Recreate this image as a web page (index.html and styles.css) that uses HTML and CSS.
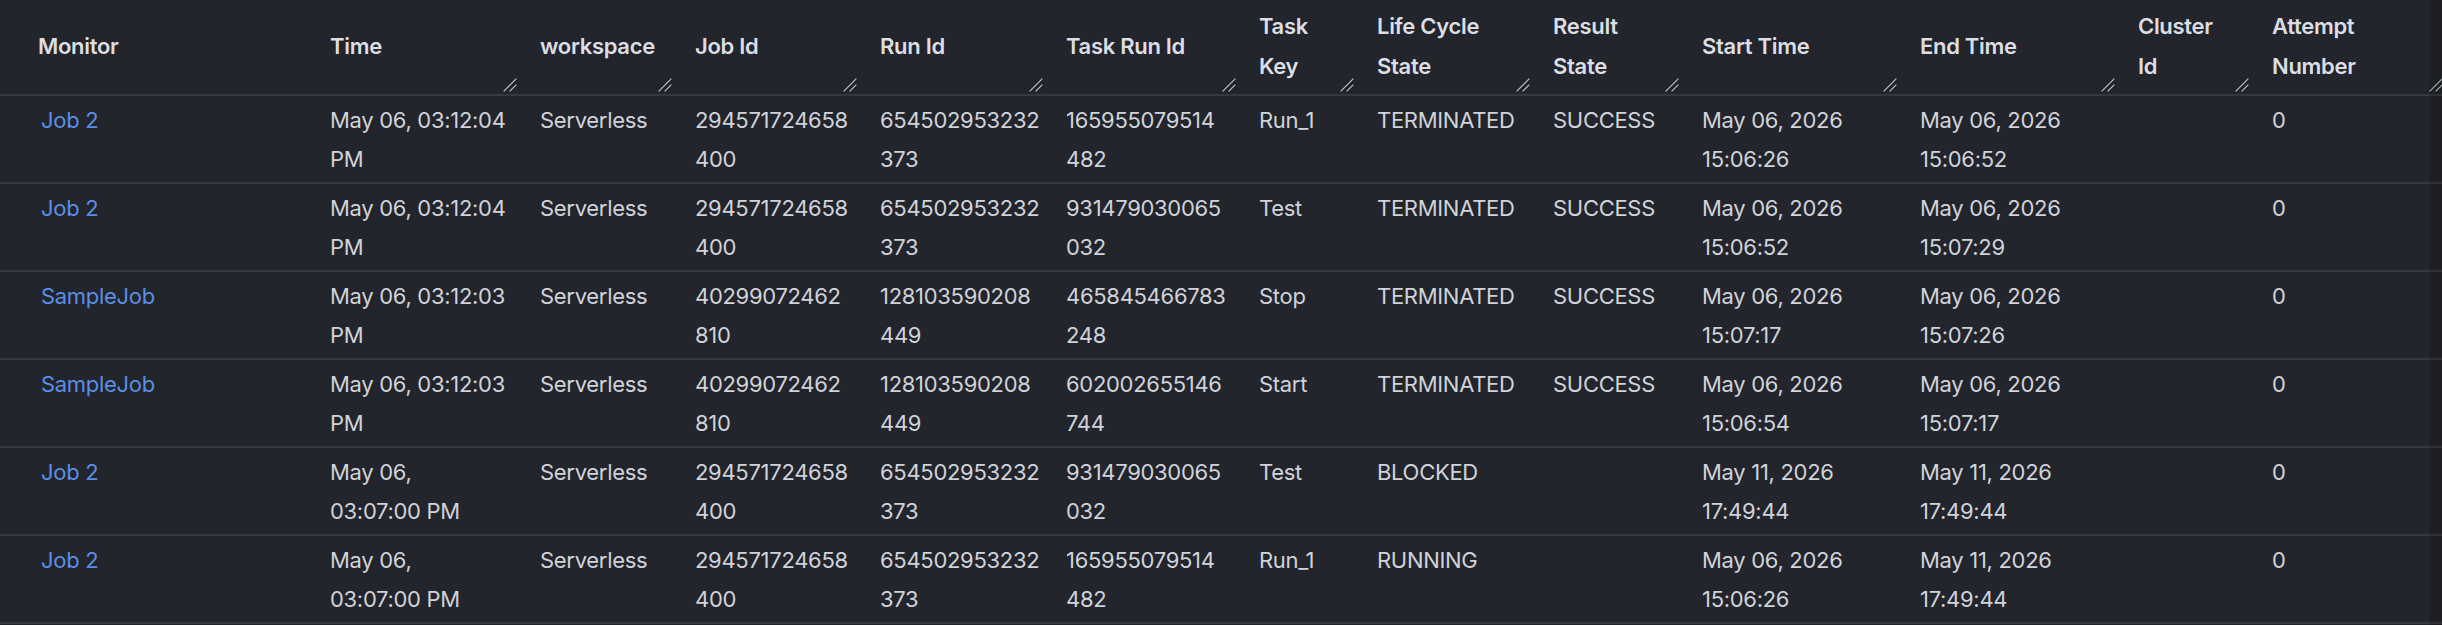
FILE: index.html
```html
<!DOCTYPE html>
<html lang="en">
<head>
<meta charset="utf-8">
<title>Job task runs</title>
<link rel="stylesheet" href="styles.css">
</head>
<body>
<div class="grid-wrap">
  <table class="grid">
    <colgroup>
      <col class="w-monitor"><col class="w-time"><col class="w-ws"><col class="w-id"><col class="w-run"><col class="w-task">
      <col class="w-key"><col class="w-life"><col class="w-result"><col class="w-date"><col class="w-date"><col class="w-cluster"><col class="w-attempt">
    </colgroup>
    <thead>
      <tr>
        <th>Monitor</th>
        <th>Time<svg class="grip" viewBox="0 0 14 14"><path class="g-dark" d="M1 13L13 1M7 13L13 7"/><path class="g-light" d="M1 13L13 1M7 13L13 7"/></svg></th>
        <th>workspace<svg class="grip" viewBox="0 0 14 14"><path class="g-dark" d="M1 13L13 1M7 13L13 7"/><path class="g-light" d="M1 13L13 1M7 13L13 7"/></svg></th>
        <th>Job Id<svg class="grip" viewBox="0 0 14 14"><path class="g-dark" d="M1 13L13 1M7 13L13 7"/><path class="g-light" d="M1 13L13 1M7 13L13 7"/></svg></th>
        <th>Run Id<svg class="grip" viewBox="0 0 14 14"><path class="g-dark" d="M1 13L13 1M7 13L13 7"/><path class="g-light" d="M1 13L13 1M7 13L13 7"/></svg></th>
        <th>Task Run Id<svg class="grip" viewBox="0 0 14 14"><path class="g-dark" d="M1 13L13 1M7 13L13 7"/><path class="g-light" d="M1 13L13 1M7 13L13 7"/></svg></th>
        <th>Task<br>Key<svg class="grip" viewBox="0 0 14 14"><path class="g-dark" d="M1 13L13 1M7 13L13 7"/><path class="g-light" d="M1 13L13 1M7 13L13 7"/></svg></th>
        <th>Life Cycle<br>State<svg class="grip" viewBox="0 0 14 14"><path class="g-dark" d="M1 13L13 1M7 13L13 7"/><path class="g-light" d="M1 13L13 1M7 13L13 7"/></svg></th>
        <th>Result<br>State<svg class="grip" viewBox="0 0 14 14"><path class="g-dark" d="M1 13L13 1M7 13L13 7"/><path class="g-light" d="M1 13L13 1M7 13L13 7"/></svg></th>
        <th>Start Time<svg class="grip" viewBox="0 0 14 14"><path class="g-dark" d="M1 13L13 1M7 13L13 7"/><path class="g-light" d="M1 13L13 1M7 13L13 7"/></svg></th>
        <th>End Time<svg class="grip" viewBox="0 0 14 14"><path class="g-dark" d="M1 13L13 1M7 13L13 7"/><path class="g-light" d="M1 13L13 1M7 13L13 7"/></svg></th>
        <th>Cluster<br>Id<svg class="grip" viewBox="0 0 14 14"><path class="g-dark" d="M1 13L13 1M7 13L13 7"/><path class="g-light" d="M1 13L13 1M7 13L13 7"/></svg></th>
        <th>Attempt<br>Number<svg class="grip" viewBox="0 0 14 14"><path class="g-dark" d="M1 13L13 1M7 13L13 7"/><path class="g-light" d="M1 13L13 1M7 13L13 7"/></svg></th>
      </tr>
    </thead>
    <tbody>
      <tr>
        <td><a class="link" href="#">Job 2</a></td>
        <td>May 06, 03:12:04<br>PM</td>
        <td>Serverless</td>
        <td>294571724658<br>400</td>
        <td>654502953232<br>373</td>
        <td>165955079514<br>482</td>
        <td>Run_1</td>
        <td>TERMINATED</td>
        <td>SUCCESS</td>
        <td>May 06, 2026<br>15:06:26</td>
        <td>May 06, 2026<br>15:06:52</td>
        <td></td>
        <td>0</td>
      </tr>
      <tr>
        <td><a class="link" href="#">Job 2</a></td>
        <td>May 06, 03:12:04<br>PM</td>
        <td>Serverless</td>
        <td>294571724658<br>400</td>
        <td>654502953232<br>373</td>
        <td>931479030065<br>032</td>
        <td>Test</td>
        <td>TERMINATED</td>
        <td>SUCCESS</td>
        <td>May 06, 2026<br>15:06:52</td>
        <td>May 06, 2026<br>15:07:29</td>
        <td></td>
        <td>0</td>
      </tr>
      <tr>
        <td><a class="link" href="#">SampleJob</a></td>
        <td>May 06, 03:12:03<br>PM</td>
        <td>Serverless</td>
        <td>40299072462<br>810</td>
        <td>128103590208<br>449</td>
        <td>465845466783<br>248</td>
        <td>Stop</td>
        <td>TERMINATED</td>
        <td>SUCCESS</td>
        <td>May 06, 2026<br>15:07:17</td>
        <td>May 06, 2026<br>15:07:26</td>
        <td></td>
        <td>0</td>
      </tr>
      <tr>
        <td><a class="link" href="#">SampleJob</a></td>
        <td>May 06, 03:12:03<br>PM</td>
        <td>Serverless</td>
        <td>40299072462<br>810</td>
        <td>128103590208<br>449</td>
        <td>602002655146<br>744</td>
        <td>Start</td>
        <td>TERMINATED</td>
        <td>SUCCESS</td>
        <td>May 06, 2026<br>15:06:54</td>
        <td>May 06, 2026<br>15:07:17</td>
        <td></td>
        <td>0</td>
      </tr>
      <tr>
        <td><a class="link" href="#">Job 2</a></td>
        <td>May 06,<br>03:07:00 PM</td>
        <td>Serverless</td>
        <td>294571724658<br>400</td>
        <td>654502953232<br>373</td>
        <td>931479030065<br>032</td>
        <td>Test</td>
        <td>BLOCKED</td>
        <td></td>
        <td>May 11, 2026<br>17:49:44</td>
        <td>May 11, 2026<br>17:49:44</td>
        <td></td>
        <td>0</td>
      </tr>
      <tr>
        <td><a class="link" href="#">Job 2</a></td>
        <td>May 06,<br>03:07:00 PM</td>
        <td>Serverless</td>
        <td>294571724658<br>400</td>
        <td>654502953232<br>373</td>
        <td>165955079514<br>482</td>
        <td>Run_1</td>
        <td>RUNNING</td>
        <td></td>
        <td>May 06, 2026<br>15:06:26</td>
        <td>May 11, 2026<br>17:49:44</td>
        <td></td>
        <td>0</td>
      </tr>
    </tbody>
  </table>
  <div class="scroll-track"></div>
</div>
</body>
</html>
```

FILE: styles.css
```css
html, body {
  margin: 0;
  padding: 0;
  background: #22252b;
}

body {
  font-family: Inter, "Noto Sans", "Liberation Sans", sans-serif;
  color: #d0d3d9;
  height: 625px;
  overflow: hidden;
}

.grid-wrap {
  position: relative;
  width: 100%;
  height: 625px;
  overflow: hidden;
}

.grid {
  table-layout: fixed;
  border-collapse: collapse;
  width: 2447px;
  font-size: 22px;
  letter-spacing: -0.3px;
}

.w-monitor { width: 311px; }
.w-time { width: 210px; }
.w-ws { width: 155px; }
.w-id { width: 185px; }
.w-run { width: 186px; }
.w-task { width: 193px; }
.w-key { width: 118px; }
.w-life { width: 176px; }
.w-result { width: 149px; }
.w-date { width: 218px; }
.w-cluster { width: 134px; }
.w-attempt { width: 194px; }

.grid th {
  position: relative;
  text-align: left;
  font-weight: 600;
  color: #dcdee3;
  line-height: 40px;
  padding: 6px 10px 8px 19px;
  vertical-align: middle;
  white-space: nowrap;
  border-bottom: 2px solid #36383d;
}

.grid td {
  line-height: 39px;
  padding: 5px 10px 3px 19px;
  vertical-align: top;
  white-space: nowrap;
  border-bottom: 2px solid #36383d;
}

.grid th:first-child {
  padding-left: 38px;
}

.grid td:first-child {
  padding-left: 41px;
}

.link {
  color: #5b8ee6;
  text-decoration: none;
}

.grip {
  position: absolute;
  right: 4px;
  bottom: 2px;
  width: 14px;
  height: 14px;
}

.g-dark {
  fill: none;
  stroke: #15171b;
  stroke-width: 3;
  stroke-linecap: round;
}

.g-light {
  fill: none;
  stroke: #b4b7bd;
  stroke-width: 1.3;
  stroke-linecap: round;
}

.scroll-track {
  position: absolute;
  top: 0;
  right: 0;
  width: 12px;
  height: 100%;
  background: rgba(0, 0, 0, 0.14);
}
```
